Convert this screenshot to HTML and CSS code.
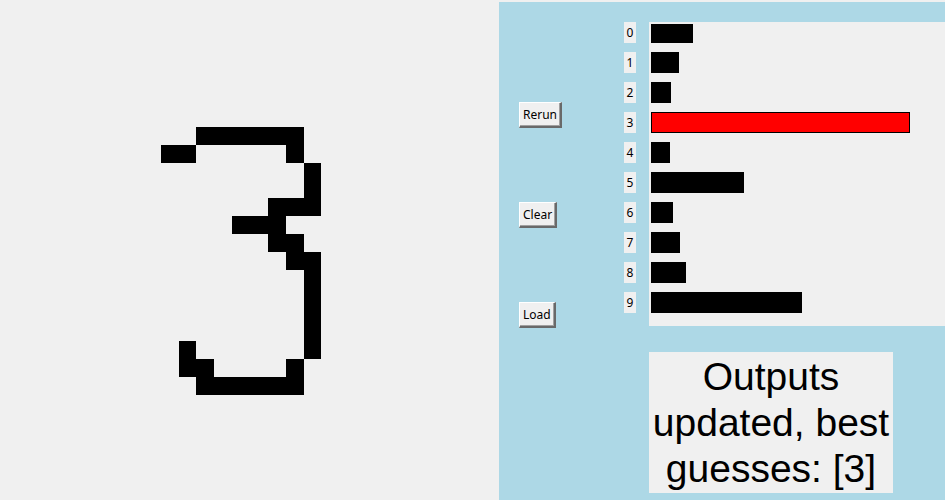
FILE: index.html
```html
<!DOCTYPE html>
<html>
<head>
<meta charset="utf-8">
<link rel="stylesheet" href="styles.css">
</head>
<body>
<div class="app">
  <div class="draw">
    <svg class="digit" viewBox="0 0 28 28" width="500" height="500" shape-rendering="crispEdges">
      <g fill="#000">
        <rect x="11" y="7" width="6" height="1"/>
        <rect x="9" y="8" width="2" height="1"/>
        <rect x="16" y="8" width="1" height="1"/>
        <rect x="17" y="9" width="1" height="2"/>
        <rect x="15" y="11" width="3" height="1"/>
        <rect x="13" y="12" width="3" height="1"/>
        <rect x="15" y="13" width="2" height="1"/>
        <rect x="16" y="14" width="2" height="1"/>
        <rect x="17" y="15" width="1" height="5"/>
        <rect x="10" y="19" width="1" height="1"/>
        <rect x="10" y="20" width="2" height="1"/>
        <rect x="16" y="20" width="1" height="1"/>
        <rect x="11" y="21" width="6" height="1"/>
      </g>
    </svg>
  </div>
  <div class="panel">
    <div class="buttons">
      <button class="btn">Rerun</button>
      <button class="btn">Clear</button>
      <button class="btn">Load</button>
    </div>
    <div class="results">
      <div class="top">
        <div class="labels">
          <span class="lbl">0</span>
          <span class="lbl">1</span>
          <span class="lbl">2</span>
          <span class="lbl">3</span>
          <span class="lbl">4</span>
          <span class="lbl">5</span>
          <span class="lbl">6</span>
          <span class="lbl">7</span>
          <span class="lbl">8</span>
          <span class="lbl">9</span>
        </div>
        <div class="chart">
          <div class="bar first" style="width:42px"></div>
          <div class="bar" style="width:28px"></div>
          <div class="bar" style="width:20px"></div>
          <div class="bar best" style="width:259px"></div>
          <div class="bar" style="width:19px"></div>
          <div class="bar" style="width:93px"></div>
          <div class="bar" style="width:22px"></div>
          <div class="bar" style="width:29px"></div>
          <div class="bar" style="width:35px"></div>
          <div class="bar" style="width:151px"></div>
        </div>
      </div>
      <div class="status">Outputs updated, best guesses: [3]</div>
    </div>
  </div>
</div>
</body>
</html>
```

FILE: styles.css
```css
html, body {
  margin: 0;
  padding: 0;
  background: #f0f0f0;
  overflow: hidden;
}
.app {
  display: flex;
  width: 945px;
  height: 500px;
  overflow: hidden;
}
.draw {
  width: 499px;
  flex: none;
  padding-top: 2px;
  overflow: hidden;
}
.digit {
  display: block;
}
.panel {
  flex: 1;
  margin-top: 2px;
  background: #add8e6;
  display: flex;
  overflow: hidden;
}
.buttons {
  width: 105px;
  flex: none;
  padding-left: 20px;
  padding-top: 100px;
  display: flex;
  flex-direction: column;
  align-items: flex-start;
  gap: 74px;
}
.btn {
  height: 26px;
  margin: 0;
  padding: 0 3px;
  background: #f0f0f0;
  font-family: "Noto Sans", "DejaVu Sans", sans-serif;
  font-size: 12px;
  color: #000;
  border-style: solid;
  border-width: 1px 2px 2px 1px;
  border-color: #ffffff #696969 #696969 #ffffff;
  box-shadow: inset -1px -1px 0 #a0a0a0;
}
.results {
  flex: 1;
  display: flex;
  flex-direction: column;
  min-width: 0;
}
.top {
  display: flex;
  padding-top: 20px;
}
.labels {
  width: 12px;
  flex: none;
  display: flex;
  flex-direction: column;
  gap: 9px;
  margin-right: 13px;
}
.lbl {
  height: 21px;
  line-height: 21px;
  background: #f0f0f0;
  text-align: center;
  font-family: "Noto Sans", "DejaVu Sans", sans-serif;
  font-size: 12px;
  color: #000;
}
.chart {
  flex: 1;
  height: 304px;
  background: #f0f0f0;
  padding-left: 2px;
  display: flex;
  flex-direction: column;
  gap: 9px;
  min-width: 400px;
}
.bar {
  height: 21px;
  background: #000;
  flex: none;
  box-sizing: border-box;
}
.bar.first {
  height: 19px;
  margin-top: 2px;
}
.bar.best {
  background: #ff0000;
  border: 1px solid #000;
}
.status {
  margin-top: 26px;
  margin-left: 25px;
  width: 244px;
  height: 141px;
  background: #f0f0f0;
  font-family: "Liberation Sans", Arial, sans-serif;
  font-size: 39px;
  line-height: 46px;
  text-align: center;
  color: #000;
  padding-top: 2px;
  box-sizing: border-box;
}
```
